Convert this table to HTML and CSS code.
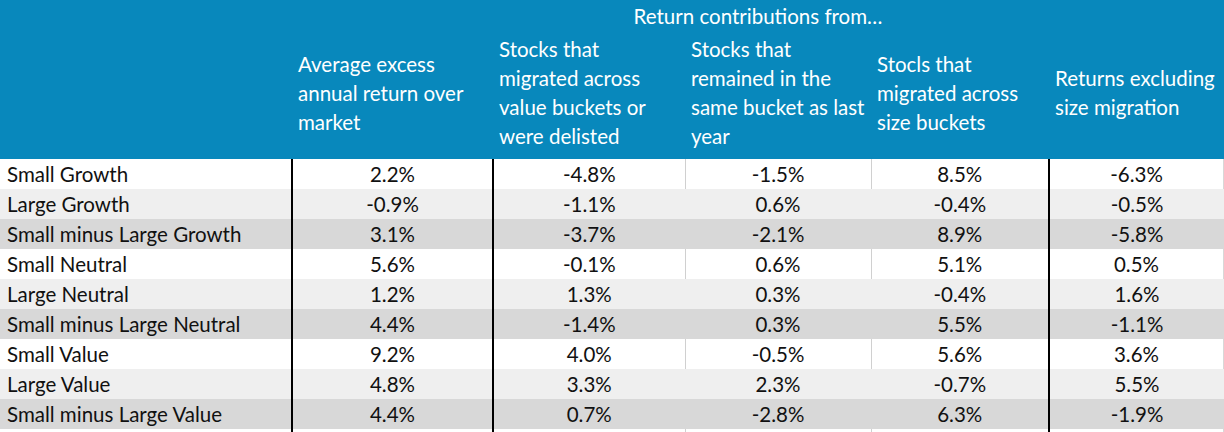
FILE: index.html
```html
<!DOCTYPE html>
<html>
<head>
<meta charset="utf-8">
<link rel="stylesheet" href="styles.css">
</head>
<body>
<table class="grid">
  <colgroup>
    <col class="w1"><col class="w2"><col class="w3"><col class="w4"><col class="w5"><col class="w6">
  </colgroup>
  <thead>
    <tr class="top">
      <th></th>
      <th colspan="5" class="group">Return contributions from…</th>
    </tr>
    <tr class="heads">
      <th></th>
      <th>Average excess<br>annual return over<br>market</th>
      <th>Stocks that<br>migrated across<br>value buckets or<br>were delisted</th>
      <th>Stocks that<br>remained in the<br>same bucket as last<br>year</th>
      <th>Stocls that<br>migrated across<br>size buckets</th>
      <th>Returns excluding<br>size migration</th>
    </tr>
  </thead>
  <tbody>
    <tr class="white"><td class="lbl">Small Growth</td><td class="b">2.2%</td><td class="b">-4.8%</td><td class="g">-1.5%</td><td class="g">8.5%</td><td class="b">-6.3%</td></tr>
    <tr class="light"><td class="lbl">Large Growth</td><td class="b">-0.9%</td><td class="b">-1.1%</td><td class="g">0.6%</td><td class="g">-0.4%</td><td class="b">-0.5%</td></tr>
    <tr class="dark"><td class="lbl">Small minus Large Growth</td><td class="b">3.1%</td><td class="b">-3.7%</td><td class="g">-2.1%</td><td class="g">8.9%</td><td class="b">-5.8%</td></tr>
    <tr class="white"><td class="lbl">Small Neutral</td><td class="b">5.6%</td><td class="b">-0.1%</td><td class="g">0.6%</td><td class="g">5.1%</td><td class="b">0.5%</td></tr>
    <tr class="light"><td class="lbl">Large Neutral</td><td class="b">1.2%</td><td class="b">1.3%</td><td class="g">0.3%</td><td class="g">-0.4%</td><td class="b">1.6%</td></tr>
    <tr class="dark"><td class="lbl">Small minus Large Neutral</td><td class="b">4.4%</td><td class="b">-1.4%</td><td class="g">0.3%</td><td class="g">5.5%</td><td class="b">-1.1%</td></tr>
    <tr class="white"><td class="lbl">Small Value</td><td class="b">9.2%</td><td class="b">4.0%</td><td class="g">-0.5%</td><td class="g">5.6%</td><td class="b">3.6%</td></tr>
    <tr class="light"><td class="lbl">Large Value</td><td class="b">4.8%</td><td class="b">3.3%</td><td class="g">2.3%</td><td class="g">-0.7%</td><td class="b">5.5%</td></tr>
    <tr class="dark"><td class="lbl">Small minus Large Value</td><td class="b">4.4%</td><td class="b">0.7%</td><td class="g">-2.8%</td><td class="g">6.3%</td><td class="b">-1.9%</td></tr>
    <tr class="white tail"><td class="lbl"></td><td class="b"></td><td class="b"></td><td class="g"></td><td class="g"></td><td class="b"></td></tr>
  </tbody>
</table>
</body>
</html>
```

FILE: styles.css
```css
html, body {
  margin: 0;
  padding: 0;
  background: #ffffff;
}

.grid {
  width: 1224px;
  table-layout: fixed;
  border-collapse: collapse;
  font-family: "Lato", "Open Sans", sans-serif;
  font-size: 20.5px;
  color: #111111;
}

.w1 { width: 292px; }
.w2 { width: 201px; }
.w3 { width: 192px; }
.w4 { width: 186px; }
.w5 { width: 178px; }
.w6 { width: 175px; }

thead th {
  background: #0888bc;
  color: #ffffff;
  font-weight: normal;
  text-align: left;
  padding: 0 0 0 6px;
  line-height: 29px;
  vertical-align: middle;
  white-space: nowrap;
}

.top th {
  height: 33px;
  vertical-align: top;
  padding-top: 2px;
}

.top .group {
  text-align: center;
  padding-left: 0;
}

.heads th {
  height: 116px;
  padding-bottom: 8px;
}

tbody td {
  height: 30px;
  padding: 0;
  text-align: center;
  line-height: 30px;
  white-space: nowrap;
}

tbody td.lbl {
  text-align: left;
  padding-left: 7px;
}

tbody td.b {
  border-left: 2px solid #000000;
}

tbody td.g {
  border-left: 1px solid transparent;
}

tr.white td { background: #ffffff; }
tr.light td { background: #efefef; }
tr.dark td { background: #d8d8d8; }

tr.white td.g { border-left-color: #d0d0d0; }
tr.light td.g { border-left-color: #efefef; }
tr.dark td.g { border-left-color: #d8d8d8; }

tr.white td:last-child { border-right: 2px solid #d8d8d8; }

tr.tail td {
  height: 3px;
  line-height: 3px;
}
```
